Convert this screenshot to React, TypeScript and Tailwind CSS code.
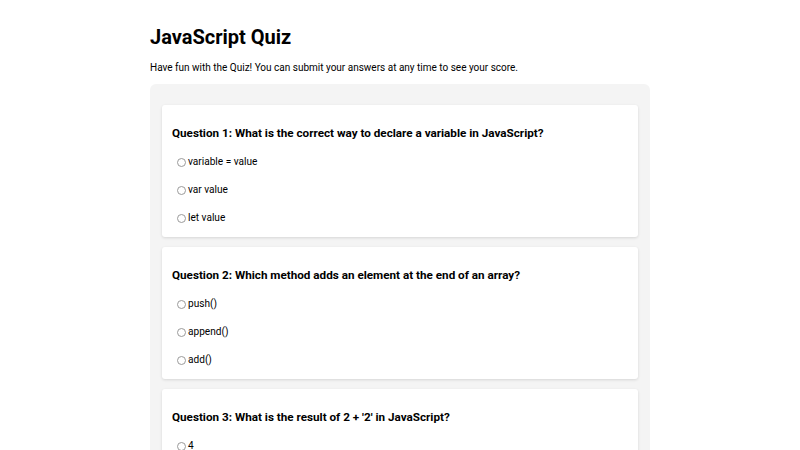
import React from "react";

const questions = [
  {
    q: "Question 1: What is the correct way to declare a variable in JavaScript?",
    options: ["variable = value", "var value", "let value"],
  },
  {
    q: "Question 2: Which method adds an element at the end of an array?",
    options: ["push()", "append()", "add()"],
  },
  {
    q: "Question 3: What is the result of 2 + '2' in JavaScript?",
    options: ["4", "22", "NaN"],
  },
];

export default function App() {
  return (
    <div className="min-h-[450px] bg-white text-black" style={{ fontFamily: "Roboto, 'Liberation Sans', sans-serif" }}>
      <div className="w-[500px] mx-auto pt-[23px]">
        <h1 className="text-[20px] leading-[28px] font-bold">JavaScript Quiz</h1>
        <p className="mt-[9px] text-[10px] leading-[16px]">
          Have fun with the Quiz! You can submit your answers at any time to see your score.
        </p>
        <div className="mt-[8px] bg-[#f4f4f4] rounded-[6px] pt-[21px] px-[12px] pb-[20px] flex flex-col gap-[10px]">
          {questions.map((item, i) => (
            <div key={i} className="bg-white rounded-[3px] shadow-[0_1px_3px_rgba(0,0,0,0.12)] pt-[20px] pb-[5px] px-[10px]">
              <h3 className="text-[11.7px] leading-[16px] font-bold mb-[7px]">{item.q}</h3>
              {item.options.map((o, j) => (
                <label key={j} className="h-[28px] flex items-center text-[10.1px] leading-[16px]">
                  <span className="ml-[5px] mr-[2px] w-[9px] h-[9px] rounded-full border border-[#9a9a9a] bg-white inline-block" />
                  <span>{o}</span>
                </label>
              ))}
            </div>
          ))}
        </div>
      </div>
    </div>
  );
}
